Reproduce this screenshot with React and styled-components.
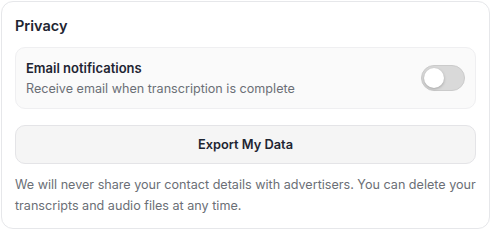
import React, { useState } from "react";
import styled, { createGlobalStyle } from "styled-components";

const GlobalStyle = createGlobalStyle`
  html, body {
    margin: 0;
    padding: 0;
    background: #ffffff;
  }
  body {
    font-family: "Inter", "Liberation Sans", sans-serif;
    -webkit-font-smoothing: antialiased;
  }
`;

const Page = styled.div`
  padding: 1px 1px 0 1px;
  width: 489px;
`;

const Card = styled.section`
  box-sizing: border-box;
  width: 489px;
  height: 228px;
  border: 1px solid #e6e7ea;
  border-radius: 12px;
  background: #ffffff;
  padding: 13px 13px 0 13px;
  display: flex;
  flex-direction: column;
`;

const Title = styled.h2`
  margin: 0;
  font-size: 14.5px;
  line-height: 22px;
  font-weight: 600;
  color: #1e2532;
`;

const SettingRow = styled.div`
  margin-top: 10px;
  box-sizing: border-box;
  height: 62px;
  border: 1px solid #efeff1;
  border-radius: 10px;
  background: #fafafa;
  padding: 0 10px;
  display: flex;
  align-items: center;
  justify-content: space-between;
`;

const SettingText = styled.div`
  display: flex;
  flex-direction: column;
  gap: 2px;
`;

const SettingLabel = styled.span`
  font-size: 13px;
  line-height: 18px;
  font-weight: 600;
  color: #1e2532;
`;

const SettingHint = styled.span`
  font-size: 12.6px;
  line-height: 19px;
  color: #6b6f76;
`;

const Track = styled.button`
  position: relative;
  width: 44px;
  height: 26px;
  padding: 0;
  border-radius: 13px;
  border: 1px solid #cbcbcb;
  background: ${(p) => (p.$on ? "#1e2532" : "#d9d9d9")};
  cursor: pointer;
`;

const Knob = styled.span`
  position: absolute;
  top: 2px;
  left: ${(p) => (p.$on ? "20px" : "2px")};
  width: 20px;
  height: 20px;
  border-radius: 50%;
  background: #ffffff;
  box-shadow: 0 1px 3px rgba(0, 0, 0, 0.25);
`;

const ExportButton = styled.button`
  margin-top: 16px;
  height: 39px;
  border: 1px solid #e4e4e7;
  border-radius: 10px;
  background: #f5f5f5;
  font-family: inherit;
  font-size: 12.8px;
  font-weight: 600;
  color: #1e2532;
  cursor: pointer;
`;

const Note = styled.p`
  margin: 10px 0 0 0;
  font-size: 12.6px;
  line-height: 21px;
  color: #6b6f76;
`;

const Toggle = () => {
  const [on, setOn] = useState(false);
  return (
    <Track $on={on} onClick={() => setOn(!on)} aria-pressed={on}>
      <Knob $on={on} />
    </Track>
  );
};

const App = () => {
  return (
    <Page>
      <GlobalStyle />
      <Card>
        <Title>Privacy</Title>
        <SettingRow>
          <SettingText>
            <SettingLabel>Email notifications</SettingLabel>
            <SettingHint>Receive email when transcription is complete</SettingHint>
          </SettingText>
          <Toggle />
        </SettingRow>
        <ExportButton>Export My Data</ExportButton>
        <Note>
          We will never share your contact details with advertisers. You can delete your
          transcripts and audio files at any time.
        </Note>
      </Card>
    </Page>
  );
};

export default App;
